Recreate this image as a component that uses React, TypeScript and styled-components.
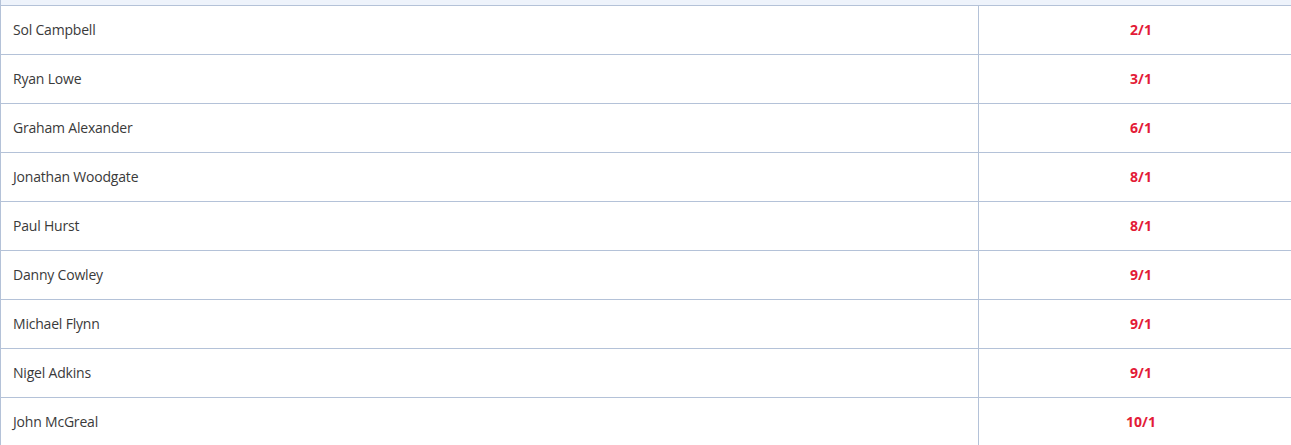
import styled, { createGlobalStyle } from "styled-components";

const GlobalStyle = createGlobalStyle`
  html, body {
    margin: 0;
    padding: 0;
    background: #ffffff;
    overflow: hidden;
  }
`;

const Page = styled.div`
  width: 1303px;
`;

const HeadStrip = styled.div`
  height: 5px;
  background-color: #eef3fb;
  border-left: 1px solid #b4c2d8;
`;

const Table = styled.table`
  width: 1303px;
  border-collapse: collapse;
  table-layout: fixed;
  font-family: "Open Sans", "Liberation Sans", sans-serif;
  font-size: 14px;
`;

const NameCol = styled.col`
  width: 978px;
`;

const Row = styled.tr`
  height: 49px;
`;

const NameCell = styled.td`
  padding: 0 0 2px 12px;
  border: 1px solid #b4c2d8;
  color: #3a3a3a;
  letter-spacing: -0.2px;
  vertical-align: middle;
`;

const OddsCell = styled.td`
  border: 1px solid #b4c2d8;
  border-right: none;
  padding: 0 0 2px 0;
  color: #e31b37;
  font-weight: 700;
  text-align: center;
  vertical-align: middle;
`;

const runners = [
  { name: "Sol Campbell", odds: "2/1" },
  { name: "Ryan Lowe", odds: "3/1" },
  { name: "Graham Alexander", odds: "6/1" },
  { name: "Jonathan Woodgate", odds: "8/1" },
  { name: "Paul Hurst", odds: "8/1" },
  { name: "Danny Cowley", odds: "9/1" },
  { name: "Michael Flynn", odds: "9/1" },
  { name: "Nigel Adkins", odds: "9/1" },
  { name: "John McGreal", odds: "10/1" },
];

export default function App() {
  return (
    <Page>
      <GlobalStyle />
      <HeadStrip />
      <Table>
        <colgroup>
          <NameCol />
          <col />
        </colgroup>
        <tbody>
          {runners.map((r) => (
            <Row key={r.name}>
              <NameCell>{r.name}</NameCell>
              <OddsCell>{r.odds}</OddsCell>
            </Row>
          ))}
        </tbody>
      </Table>
    </Page>
  );
}
